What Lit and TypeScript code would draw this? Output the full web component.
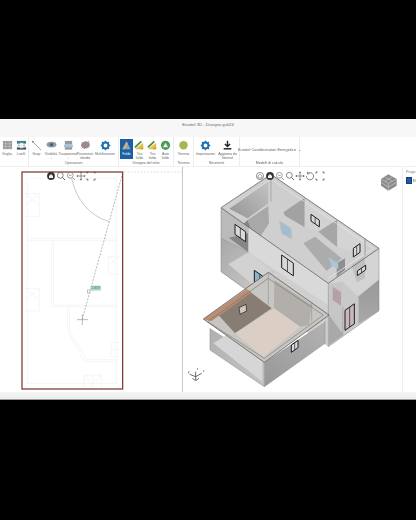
import { LitElement, html, css, svg } from "lit";
import { customElement } from "lit/decorators.js";

const gear = (c: string) => svg`<circle cx="6" cy="6" r="3.2" fill="none" stroke="${c}" stroke-width="2.2"/><path d="M6 .8V3M6 9v2.2M.8 6H3M9 6h2.2M2.3 2.3l1.6 1.6M8.1 8.1l1.6 1.6M9.7 2.3 8.1 3.9M3.9 8.1 2.3 9.7" stroke="${c}" stroke-width="1.6"/>`;
const slope = svg`<path d="M1 10 10 3v7z" fill="#e2c04e"/><path d="M1 8 8 1.5" stroke="#4c8c3c" stroke-width="2"/><path d="M6 10h4V7z" fill="#c9a22e"/>`;

const icons: Record<string, unknown> = {
  griglia: svg`<rect x="1" y="1" width="10" height="9" fill="#9a9c9c"/><path d="M1 4h10M1 7h10M4 1v9M8 1v9" stroke="#c4c6c6" stroke-width=".6"/>`,
  livelli: svg`<rect x="1" y="1" width="10" height="3" fill="#3f7f86"/><rect x="2" y="5" width="8" height="2" fill="#9dbcc0"/><rect x="1" y="8" width="10" height="2.5" fill="#41535a"/><rect x="4" y="3" width="4" height="6" fill="#fff" opacity=".7"/>`,
  snap: svg`<path d="M1 1 11 11" stroke="#8a8a8a" stroke-width=".9"/><circle cx="2" cy="2" r=".8" fill="#555"/>`,
  vis: svg`<ellipse cx="6" cy="5" rx="5.4" ry="3.2" fill="#8d9aa6"/><circle cx="6" cy="5" r="1.7" fill="#47596b"/>`,
  tras: svg`<rect x="2" y="1" width="8" height="4" fill="#8f9aa3"/><ellipse cx="6" cy="6.5" rx="5" ry="2.3" fill="#a9c3d6"/><rect x="2" y="8" width="8" height="2.5" fill="#9a9a9a"/>`,
  pos: svg`<ellipse cx="6" cy="5.5" rx="4.8" ry="3.8" fill="#a3989a"/><path d="M2 9 10 1M4 10l6-6M2 6l5-5" stroke="#8c5a55" stroke-width=".7"/>`,
  gear: gear("#1f6fb0"),
  falde: svg`<path d="M1.5 10 6 1.5 10.5 10z" fill="#8fa6b5"/><path d="M1.5 10 6 1.5 7.5 4 4 10z" fill="#d9b36c"/>`,
  tiro: slope,
  auto: svg`<circle cx="6" cy="5.8" r="5" fill="#4a9a58"/><path d="M3.2 8 6 3l2.8 5z" fill="#eaf2dc"/>`,
  terreno: svg`<circle cx="6" cy="5.8" r="4.6" fill="#a3b75a"/><ellipse cx="6" cy="4.8" rx="2.6" ry="1.4" fill="#c7a83c"/>`,
  agg: svg`<path d="M6 .8v6M3.2 4.4 6 7.2l2.8-2.8" stroke="#222" stroke-width="1.5" fill="none"/><path d="M1.8 9.6h8.4" stroke="#222" stroke-width="1.6"/>`,
};

interface Tool { icon: string; label: string[]; w: number; active?: boolean }
interface Group { w: number; label: string; tools: Tool[] }

const groups: Group[] = [
  { w: 29, label: "", tools: [
    { icon: "griglia", label: ["Griglia"], w: 14 },
    { icon: "livelli", label: ["Livelli"], w: 14 } ] },
  { w: 90, label: "Operazioni", tools: [
    { icon: "snap", label: ["Snap"], w: 13 },
    { icon: "vis", label: ["Visibilità", "⌄"], w: 16 },
    { icon: "tras", label: ["Trasparenze", "⌄"], w: 18 },
    { icon: "pos", label: ["Posizionati", "sfondo"], w: 16 },
    { icon: "gear", label: ["Multifunzione"], w: 24 } ] },
  { w: 55, label: "Disegna del tetto", tools: [
    { icon: "falde", label: ["Falde"], w: 13, active: true },
    { icon: "tiro", label: ["Tiro", "falda"], w: 13 },
    { icon: "tiro", label: ["Tiro", "falda"], w: 13 },
    { icon: "auto", label: ["Auto", "falde"], w: 13 } ] },
  { w: 20, label: "Terreno", tools: [{ icon: "terreno", label: ["Terreno"], w: 18 }] },
  { w: 46, label: "Strumenti", tools: [
    { icon: "gear", label: ["Impostazioni"], w: 22 },
    { icon: "agg", label: ["Aggiorna da", "Internet"], w: 22 } ] },
];

const tb = {
  home: svg`<circle cx="5" cy="5" r="3.6" fill="none" stroke="#777" stroke-width=".8"/><path d="M3 5 5 3l2 2v2H3z" fill="none" stroke="#777" stroke-width=".7"/>`,
  homeDark: svg`<circle cx="5" cy="5" r="3.9" fill="#333"/><path d="M3 5 5 3l2 2v2H3z" fill="#eee"/>`,
  zoom: svg`<circle cx="4.3" cy="4.3" r="2.9" fill="none" stroke="#666" stroke-width=".8"/><path d="M6.5 6.5 9 9" stroke="#666" stroke-width="1"/>`,
  zoomBox: svg`<circle cx="4.3" cy="4.3" r="2.9" fill="none" stroke="#888" stroke-width=".8"/><path d="M3 4.3h2.6M6.5 6.5 9 9" stroke="#888" stroke-width=".8"/>`,
  move: svg`<path d="M5 .8v8.4M.8 5h8.4M4 2l1-1.2L6 2M4 8l1 1.2L6 8M2 4 .8 5 2 6M8 4l1.2 1L8 6" stroke="#666" stroke-width=".7" fill="none"/>`,
  rotate: svg`<path d="M2.5 2.6A3.6 3.6 0 1 1 1.4 5.2M2.5.9v1.9h1.9" stroke="#666" stroke-width=".8" fill="none"/>`,
  full: svg`<path d="M1 2.5V1h1.5M7.5 1H9v1.5M9 7.5V9H7.5M2.5 9H1V7.5" stroke="#555" stroke-width=".9" fill="none"/>`,
};

const plan = svg`
  <g fill="none" stroke="#f1f1f1" stroke-width="2.2">
    <path d="M82 40H350V655H82Z"/>
    <path d="M82 221H350M82 227H350"/>
    <path d="M155 227V425H350M161 227V420H350"/>
    <path d="M203 427V497L253 590H350M209 427V495L259 584H350"/>
    <path d="M76 85h42v70H76M76 85 118 122M118 85 76 122"/>
    <path d="M355 275h-30v52h30M325 275l30 28M355 275l-30 28"/>
    <path d="M74 370h44v68H74M74 370l44 34M118 370l-44 34"/>
    <path d="M357 533h-24v42h24M333 553h24"/>
    <path d="M252 668v-38h52v38M252 630l26 28 26-28M278 630v38"/>
  </g>
  <path d="M215 40Q238 142 328 170" fill="none" stroke="#9a9a9a" stroke-width="1.6"/>
  <path d="M368 24 247 462" stroke="#777" stroke-width="1.6" stroke-dasharray="6 4"/>
  <path d="M372 21H545" stroke="#b5b5b5" stroke-width="1.4" stroke-dasharray="5 5"/>
  <path d="M231 464H264M247 448V480" stroke="#777" stroke-width="1.5"/>
  <rect x="262" y="375" width="8" height="9" fill="#fff" stroke="#777" stroke-width="1.2"/>
  <rect x="272" y="362" width="31" height="15" fill="#a8dccf"/>
  <text x="287" y="373" font-size="10" text-anchor="middle" fill="#3c6f63" font-family="Liberation Sans, sans-serif">2.859</text>
  <rect x="66" y="21" width="302" height="651" fill="none" stroke="#7a2f2b" stroke-width="3.6"/>
`;

const leftWin = (x: number, y: number, w: number, h: number, glass = "#d6dadc") => {
  const d = w * 0.7;
  return svg`<polygon points="${x},${y} ${x + w},${y + d} ${x + w},${y + d + h} ${x},${y + h}" fill="${glass}" stroke="#1c1c1c" stroke-width="3"/>
  <path d="M${x + w / 2} ${y + d / 2}v${h}" stroke="#1c1c1c" stroke-width="2"/>`;
};
const rightWin = (x: number, y: number, w: number, h: number, glass = "#d6dadc") => {
  const d = w * 0.7;
  return svg`<polygon points="${x},${y} ${x + w},${y - d} ${x + w},${y - d + h} ${x},${y + h}" fill="${glass}" stroke="#1c1c1c" stroke-width="3"/>
  <path d="M${x + w / 2} ${y - d / 2}v${h}" stroke="#1c1c1c" stroke-width="2"/>`;
};

const building = svg`
  <defs>
    <linearGradient id="backL" x1="0" y1="1" x2="1" y2="0"><stop offset="0" stop-color="#949494"/><stop offset="1" stop-color="#c4c4c4"/></linearGradient>
    <linearGradient id="lowL" x1="0" y1="0" x2="1" y2="1"><stop offset="0" stop-color="#a8a8a8"/><stop offset="1" stop-color="#cfcfcf"/></linearGradient>
    <linearGradient id="lowR" x1="0" y1="0" x2="0" y2="1"><stop offset="0" stop-color="#999"/><stop offset="1" stop-color="#a8a8a8"/></linearGradient>
    <linearGradient id="annexR" x1="0" y1="1" x2="1" y2="0"><stop offset="0" stop-color="#989898"/><stop offset="1" stop-color="#b2b2b2"/></linearGradient>
    <linearGradient id="annexL" x1="0" y1="0" x2="1" y2="1"><stop offset="0" stop-color="#b0b0b0"/><stop offset="1" stop-color="#c4c4c4"/></linearGradient>
  </defs>
  <polygon points="108,128 258,28 582,250 582,437 430,545 208,392 108,320" fill="#cfcfcf"/>
  <polygon points="130,130 250,47 250,115 188,160" fill="url(#backL)"/>
  <polygon points="262,42 356,104 300,132 262,110" fill="#cecece"/>
  <polygon points="188,165 250,123 252,175 212,236" fill="#a8a8a8"/>
  <polygon points="132,218 188,165 214,238 190,262" fill="#858585"/>
  <polygon points="295,142 358,100 358,186 300,152" fill="#a2a2a2"/>
  <polygon points="358,100 455,165 400,200 358,186" fill="#d2d2d2"/>
  <polygon points="400,200 455,165 455,245" fill="#a6a6a6"/>
  <polygon points="458,170 540,224 540,270 458,245" fill="#d4d4d4"/>
  <polygon points="355,235 390,215 470,280 425,318" fill="#acacac"/>
  <polygon points="455,295 480,280 480,315 455,335" fill="#8f8f8f"/>
  <polygon points="430,276 460,296 460,312 440,302" fill="#a9c6d8"/>
  <polygon points="284,168 318,190 320,222 290,205" fill="#a3bdce" stroke="#c0c0c0" stroke-width="3"/>
  <path d="M128 133 258 42 565 250 430 340" fill="none" stroke="#e4e4e4" stroke-width="2.5"/>
  <polygon points="108,128 190,186 190,262 108,218" fill="#bababa"/>
  <polygon points="132,218 190,205 190,262" fill="#868686"/>
  <polygon points="190,186 430,355 430,420 190,262" fill="#d9d9d9"/>
  <polygon points="430,355 582,250 582,340 520,395 472,350" fill="#d4d4d4"/>
  <polygon points="500,300 540,272 540,340 515,352" fill="#c0c0c0"/>
  <path d="M540 222V272" stroke="#7f7f7f" stroke-width="2"/>
  <polygon points="108,218 190,262 270,320 208,392 108,320" fill="url(#lowL)"/>
  <polygon points="130,298 190,262 262,316 205,360" fill="#d2d2d2"/>
  <polygon points="520,395 582,345 582,437 520,477" fill="url(#lowR)"/>
  <polygon points="472,350 520,395 520,477 472,510" fill="#c9c9c9"/>
  <polygon points="432,450 475,425 475,510 432,540" fill="#a9a9a9"/>
  <polygon points="432,358 472,350 472,505 432,450" fill="#c6c6c6"/>
  <polygon points="443,365 468,382 468,422 443,405" fill="#b7a0a4"/>
  <path d="M108 128 258 28 582 250 430 355Z" fill="none" stroke="#595959" stroke-width="2.2"/>
  <path d="M108 128V320M582 250V437M430 355V545M258 28V110" stroke="#858585" stroke-width="1.6" fill="none"/>
  <path d="M108 220 190 262M520 395 582 345M358 100V186M455 165V245" stroke="#959595" stroke-width="1.4" fill="none"/>
  <path d="M108 320 210 392M582 437 430 545" stroke="#858585" stroke-width="1.6" fill="none"/>
  ${leftWin(150, 178, 32, 30)}
  ${leftWin(378, 148, 25, 20)}
  ${rightWin(505, 250, 20, 26)}
  ${rightWin(517, 318, 25, 14)}
  ${leftWin(290, 270, 35, 38)}
  ${leftWin(208, 316, 33, 34, "#8fb3cb")}
  ${rightWin(480, 436, 28, 60, "#c7b8ba")}
  <polygon points="238,592 420,470 420,535 238,665" fill="url(#annexR)"/>
  <polygon points="75,490 238,592 238,665 75,555" fill="url(#annexL)"/>
  <polygon points="85,535 140,500 232,575 232,650" fill="#d6d6d6"/>
  <polygon points="55,462 250,322 432,450 238,592" fill="#c8c6c3"/>
  <polygon points="268,345 380,420 372,480 345,485 267,430" fill="#b2afab"/>
  <polygon points="100,450 195,380 260,430 150,505" fill="#877d73"/>
  <polygon points="150,505 267,430 345,485 235,577" fill="#dbcec5"/>
  <polygon points="55,463 185,372 200,382 80,468" fill="#b98e75"/>
  <path d="M55 462 250 322 432 450 238 592Z" fill="none" stroke="#4a4440" stroke-width="2"/>
  <path d="M68 470 250 340 415 450 238 580Z" fill="none" stroke="#6d655f" stroke-width="1.6"/>
  <path d="M75 490V555L238 665 420 535V470M238 592V665M250 322V420M380 410V470" fill="none" stroke="#8a8a8a" stroke-width="1.6"/>
  <polygon points="162,428 183,418 185,438 165,448" fill="#d1c7bd" stroke="#3a332e" stroke-width="2.5"/>
  ${rightWin(319, 540, 20, 22)}
  <polygon points="610,28 635,42 635,62 610,77 588,62 588,42" fill="#8c8c8c"/>
  <path d="M588 42 610 55 635 42M610 55V77M599 35 622 49M622 35 599 49M588 52 610 66 635 52" fill="none" stroke="#c4c4c4" stroke-width="2"/>
  <path d="M32 645V620M32 635 14 628M32 635 50 625M22 640 32 647 42 640" fill="none" stroke="#222" stroke-width="2"/>
  <text x="35" y="614" font-size="8" fill="#333" font-family="Liberation Sans, sans-serif">z</text>
  <text x="9" y="623" font-size="8" fill="#333" font-family="Liberation Sans, sans-serif">y</text>
  <text x="54" y="622" font-size="8" fill="#333" font-family="Liberation Sans, sans-serif">x</text>
`;

@customElement("app-root")
export class AppRoot extends LitElement {
  static styles = css`
    :host { display: block; width: 416px; height: 520px; background: #000; overflow: hidden; font-family: "Liberation Sans", Arial, sans-serif; }
    .window { margin-top: 119px; height: 281px; display: flex; flex-direction: column; background: #fff; filter: blur(0.45px); }
    .title { height: 18px; flex: none; background: #f7f7f7; display: flex; align-items: center; justify-content: center; font-size: 4.2px; color: #666; padding-bottom: 7px; box-sizing: border-box; }
    .ribbon { height: 30px; flex: none; display: flex; background: #fff; border-bottom: 1px solid #f0f0f0; box-sizing: border-box; }
    .group { flex: none; display: flex; flex-direction: column; border-right: 1px solid #ececec; box-sizing: border-box; }
    .tools { flex: 1; display: flex; justify-content: center; align-items: flex-start; padding-top: 2px; }
    .tool { flex: none; display: flex; flex-direction: column; align-items: center; height: 20px; padding-top: 1px; box-sizing: border-box; font-size: 3.4px; line-height: 4px; color: #666; white-space: nowrap; }
    .tool.active { background: #1d5fa6; color: #fff; }
    .tool svg { width: 11px; height: 11px; flex: none; margin-bottom: 1px; }
    .glabel { height: 6px; flex: none; text-align: center; font-size: 3.6px; line-height: 7px; color: #666; }
    .combo { width: 60px; }
    .combo .box { flex: 1; display: flex; align-items: center; justify-content: center; gap: 2px; font-size: 3.9px; color: #666; white-space: nowrap; padding-top: 2px; }
    .main { flex: 1; min-height: 0; display: flex; }
    .pane-left { position: relative; width: 182px; flex: none; border-right: 1px solid #c6c6c6; box-sizing: content-box; }
    .pane-left > svg, .viewer > svg { display: block; }
    .viewer { position: relative; width: 219px; flex: none; }
    .side { flex: 1; min-width: 0; border-left: 1px solid #f0f0f0; padding: 3px 0 0 3px; font-size: 3.6px; color: #777; display: flex; flex-direction: column; gap: 3px; }
    .side .row { display: flex; align-items: center; gap: 1px; }
    .side .badge { width: 7px; height: 7px; background: #1f5ca8; border: 1px solid #163f78; box-sizing: border-box; }
    .bar { position: absolute; top: 4px; display: flex; }
    .bar svg { width: 10px; height: 10px; flex: none; }
    .bar.l { left: 46px; }
    .bar.r { left: 72px; }
    .status { height: 8px; flex: none; background: linear-gradient(#f6f6f6, #ececec); border-bottom: 1px solid #9c9c9c; box-sizing: border-box; }
  `;

  private tool(t: Tool) {
    return html`<div class="tool ${t.active ? "active" : ""}" style="width:${t.w}px">
      <svg viewBox="0 0 12 12">${icons[t.icon]}</svg>
      ${t.label.map((l) => html`<div>${l}</div>`)}
    </div>`;
  }

  private bar(cls: string, items: unknown[]) {
    return html`<div class="bar ${cls}">${items.map((i) => html`<svg viewBox="0 0 10 10">${i}</svg>`)}</div>`;
  }

  render() {
    return html`<div class="window">
      <div class="title">Eurotel 3D - Disegno.gsh24</div>
      <div class="ribbon">
        ${groups.map((g) => html`<div class="group" style="width:${g.w}px">
          <div class="tools">${g.tools.map((t) => this.tool(t))}</div>
          <div class="glabel">${g.label}</div>
        </div>`)}
        <div class="group combo">
          <div class="box">Eurotel Condizionatori Energetico <span>⌄</span></div>
          <div class="glabel">Modelli di calcolo</div>
        </div>
      </div>
      <div class="main">
        <div class="pane-left">
          <svg width="182" height="225" viewBox="0 6 546 675">${plan}</svg>
          ${this.bar("l", [tb.homeDark, tb.zoom, tb.zoomBox, tb.move, tb.full])}
        </div>
        <div class="viewer">
          <svg width="219" height="225" viewBox="-6 6 657 675">${building}</svg>
          ${this.bar("r", [tb.home, tb.homeDark, tb.zoomBox, tb.zoom, tb.move, tb.rotate, tb.full])}
        </div>
        <div class="side">
          <div>Proge</div>
          <div class="row"><span class="badge"></span><span>El</span></div>
        </div>
      </div>
      <div class="status"></div>
    </div>`;
  }
}
